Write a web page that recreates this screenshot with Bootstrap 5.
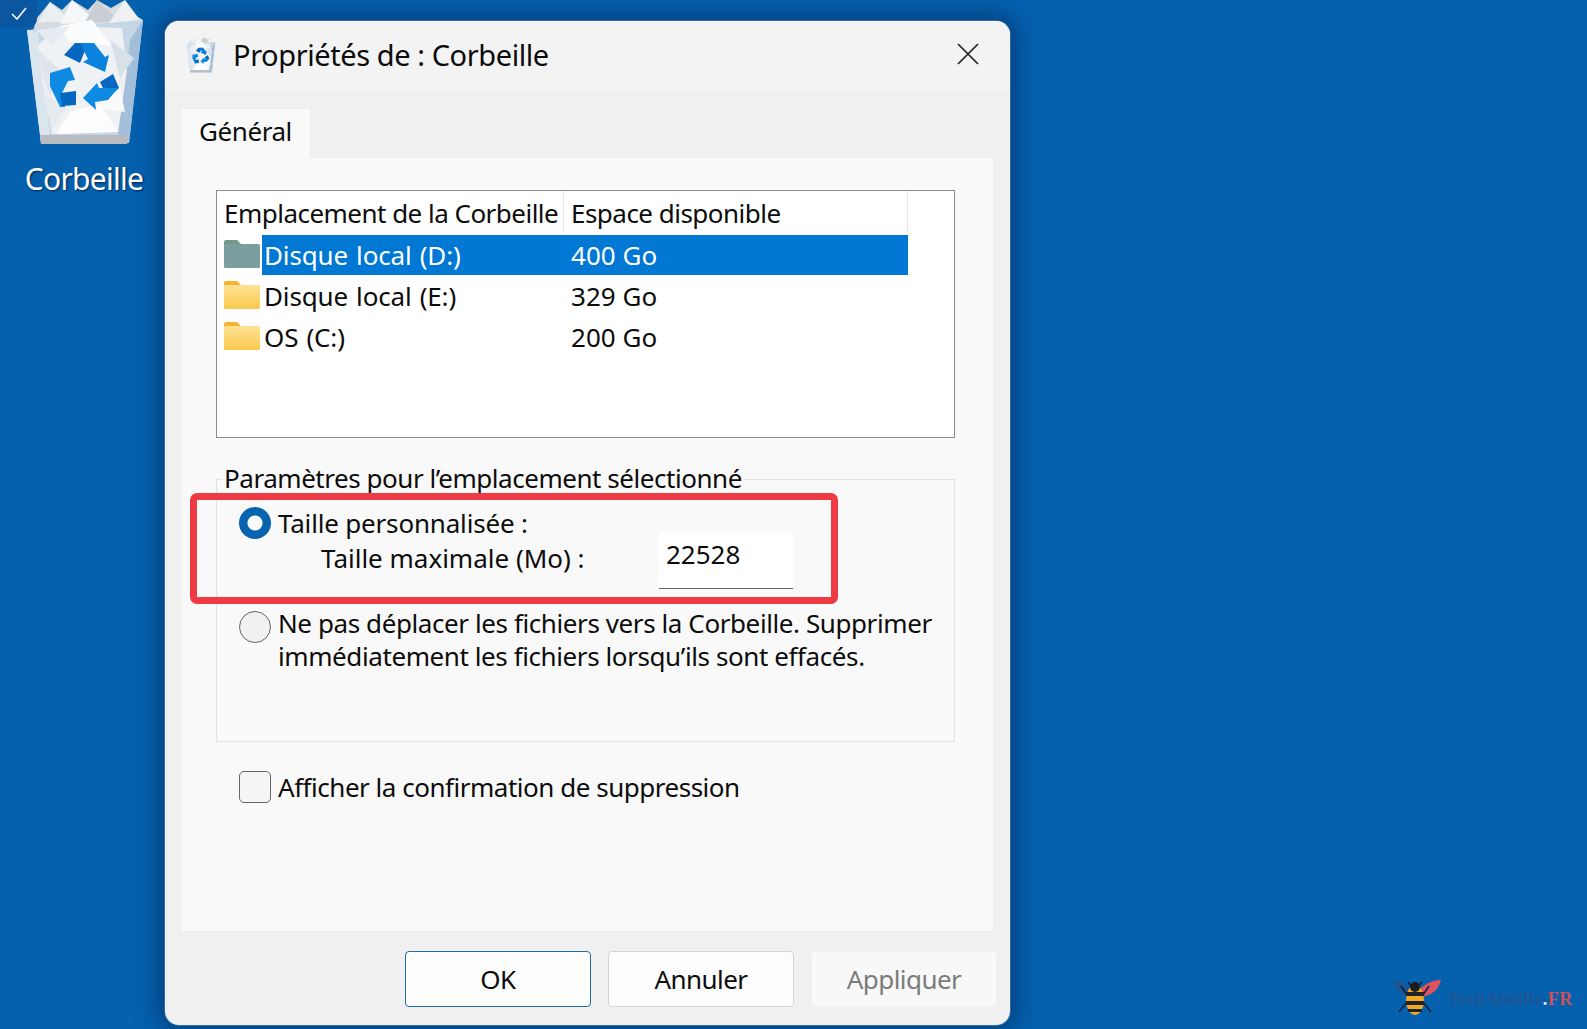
<!doctype html>
<html lang="fr">
<head>
<meta charset="utf-8">
<title>Propriétés de : Corbeille</title>
<link href="https://cdn.jsdelivr.net/npm/bootstrap@5.3.0/dist/css/bootstrap.min.css" rel="stylesheet">
<style>
html,body{height:100%}
body{margin:0;overflow:hidden;background:#0561ae;font-family:"Noto Sans","Liberation Sans",sans-serif;font-size:26px;line-height:1.25;color:#0c0c0c;letter-spacing:-.55px}
.desk{position:relative;width:1587px;height:1029px;background:#0560ae}
.deskicon{position:absolute;left:0;top:0;width:170px}
.selbox{position:absolute;left:0;top:0;width:37px;height:27px;background:#0a56a0;border-radius:0 0 8px 0;display:flex;align-items:center;justify-content:center}
.binbig{display:block;width:170px;height:150px}
.deskname{position:absolute;left:0;top:160px;width:168px;text-align:center;color:#fff;font-size:30px;letter-spacing:-.75px;text-shadow:1px 1px 2px #00254d}
.win{position:absolute;left:165px;top:21px;width:845px;height:1004px;background:#f0f0f0;border-radius:14px;box-shadow:0 0 0 1px #2b6ea3,0 0 22px 6px rgba(0,30,70,.5);overflow:hidden}
.titlebar{height:69px;background:#f3f3f3;padding-left:20px}
.titlebar>svg{margin-top:-2px}
.titletxt{margin-left:16px;font-size:29px;letter-spacing:-.42px}
.closex{margin-left:auto;margin-right:30px;margin-top:-4px;padding:0;border:0;background:none;line-height:0}
.winbody{padding:18px 16px 0 15px}
.tabx{width:131px;height:50px;background:#f9f9f9;border:1px solid #ececec;border-bottom:0;padding-left:18px;line-height:44px;position:relative;z-index:1;font-size:26px;letter-spacing:-.42px}
.panel{height:775px;margin-top:-1px;background:#f9f9f9;border:1px solid #ececec;padding:32px 38px 0 35px}
.lst{height:248px;background:#fff;border:1px solid #8c8c8c;padding-left:7px}
.lhead{height:44px;width:684px}
.c1{width:340px;flex:none}
.c2{flex:1;padding-left:7px}
.lhead .c1,.lhead .c2{height:42px;line-height:44px;letter-spacing:-.52px}
.lhead .c1{border-right:1px solid #e5e5e5}
.lhead .c2{border-right:1px solid #e5e5e5}
.lrow{height:41px;width:684px;line-height:40px;letter-spacing:.02px}
.lrow .c1{display:flex;align-items:flex-start}
.fold{width:36px;height:29px;flex:none;margin-right:2px;display:block;margin-top:4px}
.rtxt{flex:1;padding-left:2px;white-space:nowrap;word-spacing:1.5px;letter-spacing:-.15px}
.sel .rtxt,.sel .c2{background:#0078d4;color:#fff;height:40px;line-height:41px}
.grp{position:relative;height:263px;margin-top:41px;border:1px solid #e2e2e2;padding:27px 20px 0 22px}
.grpt{position:absolute;left:5px;top:-18px;background:#f9f9f9;padding:0 2px;white-space:nowrap;letter-spacing:-.46px}
.radiox.form-check-input{width:32px;height:32px;margin:0;flex:none;border:1.5px solid #666;background-color:#f1f1f1;border-radius:50%}
.radiox.form-check-input:checked{border:0;background-image:radial-gradient(circle,#fafafa 0 7px,#0563b0 8px)}
.chkx.form-check-input{width:32px;height:32px;margin:0;flex:none;border:1.5px solid #666;background-color:#f5f5f5;border-radius:5px}
.lbl1{margin-left:7px;line-height:32px;letter-spacing:-.18px}
.sub{margin-left:82px;margin-top:1px}
.subl{width:338px;line-height:36px;letter-spacing:0}
.valbox{width:134px;height:56px;margin-top:-7px;background:#fff;border:0;border-bottom:1px solid #666;padding:0 7px 14px;border-radius:0;font:inherit;letter-spacing:0;color:#0c0c0c;box-shadow:none}
.opt2{margin-top:22px}
.opt2 .lbl2{margin-left:7px;line-height:33px;margin-top:-4px;letter-spacing:-.41px}
.chkrow{margin-top:29px;padding-left:23px}
.chkrow .lbl1{margin-left:7px;letter-spacing:-.48px}
.redbox{position:absolute;left:190px;top:493px;width:648px;height:111px;border:7px solid #ee3b43;border-radius:7px;pointer-events:none}
.foot{padding-top:19px;gap:17px;margin-left:225px;width:591px}
.bx{width:186px;flex:none;height:56px;padding:0;background:#fdfdfd;border:1px solid #d4d4d4;border-radius:4px;font-size:26px;letter-spacing:-.55px;color:#0c0c0c}
.bx.primary{border-color:#1c6ea8}
.bx:disabled{background:#f8f8f8;border-color:#f3f3f3;color:#7b7b7b;opacity:1}
.wm{position:absolute;left:1391px;top:972px;width:190px;height:48px}
.wmt{position:absolute;left:56px;top:15px;font-family:"Liberation Serif",serif;font-size:18px;font-weight:700;color:#1d5593;letter-spacing:.5px;line-height:24px;white-space:nowrap}
.wmt b{color:#cf4f58}.wmt i{color:#e8eef5;font-style:normal}
</style>
</head>
<body>
<div class="desk">
<svg width="0" height="0" class="position-absolute">
<defs>
<linearGradient id="fg" x1="0" y1="0" x2="0" y2="1"><stop offset="0" stop-color="#fee294"/><stop offset="1" stop-color="#fbc94e"/></linearGradient>
<symbol id="bin" viewBox="0 0 170 150">
<polygon points="37,18 50,2 62,10 72,0 88,10 97,0 111,8 125,0 133,14 143,20 138,40 30,40" fill="#d7dce0"/>
<polygon points="50,2 72,22 38,22" fill="#eceff1"/>
<polygon points="72,0 97,22 60,24" fill="#f6f7f8"/>
<polygon points="97,0 120,22 85,22" fill="#c9ced3"/>
<polygon points="125,0 140,20 108,24" fill="#eef0f2"/>
<polygon points="27,30 143,20 129,143 41,143" fill="#c5d6e6"/>
<polygon points="27,30 38,32 50,135 41,143" fill="#dbe5ee"/>
<polygon points="143,20 130,40 118,135 129,143" fill="#a3bfda"/>
<polygon points="38,45 60,26 122,28 127,70 118,132 52,134 44,90" fill="#eff2f5"/>
<polygon points="60,26 92,20 112,46 70,42" fill="#fbfcfd"/>
<polygon points="38,50 60,70 50,96 44,80" fill="#dfe5eb"/>
<polygon points="110,40 134,58 120,78" fill="#d9e1e8"/>
<polygon points="42,92 66,108 52,130" fill="#e6ebef"/>
<polygon points="120,88 125,112 96,108" fill="#f9fafb"/>
<polygon points="70,112 100,104 118,132 56,134" fill="#fdfdfd"/>
<polygon points="36,30 70,26 52,46" fill="#e6ecf1"/>
<polygon points="40,135 128,135 127,144 41,144" fill="#b8bcc0"/>
<polygon points="64,55 75,43 88,43 80,63" fill="#0567bf"/>
<polygon points="80,43 94,43 105,57 109,55 105,72 83,62 88,59" fill="#0b82dc"/>
<polygon points="50,73 70,67 75,80 68,81 62,93 65,107 60,107 50,86" fill="#0d8ae2"/>
<polygon points="60,93 76,91 76,105 62,106" fill="#0567bf"/>
<polygon points="100,82 113,74 119,88 108,98" fill="#0567bf"/>
<polygon points="83,98 97,83 99,88 118,88 108,100 95,102 96,110" fill="#0d8ae2"/>
</symbol>
<symbol id="folderY" viewBox="0 0 36 29">
<path d="M0 3a2 2 0 0 1 2-2h11l5 5H0z" fill="#f3b52b"/>
<rect y="5" width="36" height="24" rx="1.5" fill="url(#fg)"/>
</symbol>
<symbol id="folderD" viewBox="0 0 36 29">
<path d="M0 3a2 2 0 0 1 2-2h11l5 5H0z" fill="#729a84"/>
<rect y="5" width="36" height="24" rx="1.5" fill="#7b9fa1"/>
</symbol>
</defs>
</svg>

<div class="deskicon">
<svg class="binbig" viewBox="0 0 170 150"><use href="#bin"/></svg>
<div class="selbox"><svg width="16" height="13" viewBox="0 0 16 13"><path d="M1 7l5 5L15 1" fill="none" stroke="#fff" stroke-width="1.6"/></svg></div>
<div class="deskname">Corbeille</div>
</div>

<div class="win d-flex flex-column">
<div class="titlebar d-flex align-items-center">
<svg width="32" height="38" viewBox="20 -5 130 155"><use href="#bin" width="170" height="150"/></svg>
<span class="titletxt">Propriétés de : Corbeille</span>
<button class="closex" type="button" aria-label="Fermer"><svg width="24" height="24" viewBox="0 0 24 24"><path d="M2 2l20 20M22 2L2 22" stroke="#222" stroke-width="1.7"/></svg></button>
</div>
<div class="winbody">
<div class="tabx">Général</div>
<div class="panel">
<div class="lst">
<div class="lhead d-flex"><div class="c1">Emplacement de la Corbeille</div><div class="c2">Espace disponible</div></div>
<div class="lrow sel d-flex"><div class="c1"><svg class="fold"><use href="#folderD"/></svg><span class="rtxt">Disque local (D:)</span></div><div class="c2">400 Go</div></div>
<div class="lrow d-flex"><div class="c1"><svg class="fold"><use href="#folderY"/></svg><span class="rtxt">Disque local (E:)</span></div><div class="c2">329 Go</div></div>
<div class="lrow d-flex"><div class="c1"><svg class="fold"><use href="#folderY"/></svg><span class="rtxt">OS (C:)</span></div><div class="c2">200 Go</div></div>
</div>
<div class="grp">
<div class="grpt">Paramètres pour l’emplacement sélectionné</div>
<div class="d-flex align-items-center"><input class="form-check-input radiox" type="radio" name="t" id="r1" checked><label class="lbl1" for="r1">Taille personnalisée :</label></div>
<div class="sub d-flex align-items-start"><span class="subl">Taille maximale (Mo) :</span><input class="valbox" type="text" value="22528" aria-label="Taille maximale (Mo)"></div>
<div class="opt2 d-flex align-items-start"><input class="form-check-input radiox" type="radio" name="t" id="r2"><label class="lbl2" for="r2">Ne pas déplacer les fichiers vers la Corbeille. Supprimer immédiatement les fichiers lorsqu’ils sont effacés.</label></div>
</div>
<div class="chkrow d-flex align-items-center"><input class="form-check-input chkx" type="checkbox" id="c1"><label class="lbl1" for="c1">Afficher la confirmation de suppression</label></div>
</div>
<div class="foot d-flex">
<button class="btn bx primary" type="button">OK</button>
<button class="btn bx" type="button">Annuler</button>
<button class="btn bx" type="button" disabled>Appliquer</button>
</div>
</div>
</div>

<div class="redbox"></div>

<div class="wm">
<svg width="54" height="46" viewBox="0 0 54 46">
<path d="M28 18C36 10 44 8 50 8c-2 8-8 16-21 17z" fill="#e0525c"/>
<path d="M20 18C14 10 8 9 2 9c2 8 6 13 17 16z" fill="#1d5593"/>
<path d="M17 10l5 6M31 10l-5 6M16 23L10 14M32 23l6-9M16 30L8 40M32 30l8 10" stroke="#14213a" stroke-width="1.6" fill="none"/>
<ellipse cx="24" cy="28" rx="9" ry="15" fill="#f1ab22"/>
<rect x="15" y="20" width="18" height="4" fill="#20232a"/>
<rect x="15" y="29" width="18" height="4" fill="#20232a"/>
<rect x="17" y="37" width="14" height="3" fill="#20232a"/>
<circle cx="24" cy="15" r="5" fill="#1a1c22"/>
</svg>
<div class="wmt">TechAbeille<i>.</i><b>FR</b></div>
</div>
</div>
</body>
</html>
